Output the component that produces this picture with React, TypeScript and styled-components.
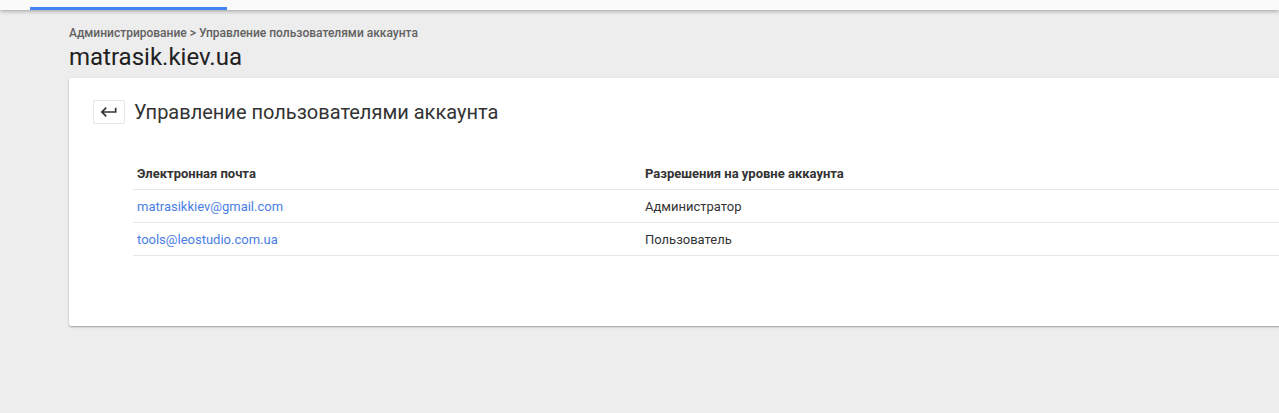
import React from "react";
import styled, { createGlobalStyle } from "styled-components";

const Global = createGlobalStyle`
  html, body {
    margin: 0;
    padding: 0;
    background: #ededed;
    overflow: hidden;
    font-family: Roboto, "Noto Sans", Arial, sans-serif;
  }
`;

const TopBar = styled.div`
  position: relative;
  z-index: 1;
  height: 10px;
  background: #fafafa;
  box-shadow: 0 1px 4px rgba(0, 0, 0, 0.35);
  display: flex;
  align-items: flex-end;
`;

const TabIndicator = styled.div`
  margin-left: 30px;
  width: 197px;
  height: 3px;
  background: #4285f4;
`;

const Main = styled.div`
  padding: 15px 0 0 69px;
  overflow: hidden;
`;

const Breadcrumb = styled.div`
  font-size: 12px;
  line-height: 16px;
  font-weight: 500;
  color: #616161;
`;

const PageTitle = styled.h1`
  margin: 1px 0 0;
  font-size: 24px;
  line-height: 30px;
  font-weight: 400;
  color: #212121;
`;

const Card = styled.div`
  margin: 6px 0 4px;
  width: 1300px;
  background: #fff;
  border-radius: 2px;
  box-shadow: 0 1px 2px rgba(0, 0, 0, 0.35);
  padding: 22px 0 70px 24px;
  box-sizing: border-box;
`;

const CardHeader = styled.div`
  display: flex;
  align-items: center;
  gap: 9px;
  height: 24px;
`;

const BackButton = styled.button`
  width: 32px;
  height: 24px;
  padding: 0;
  border: 1px solid #e6e6e6;
  background: #fff;
  border-radius: 1px;
  display: flex;
  align-items: center;
  justify-content: center;
  cursor: pointer;
`;

const CardTitle = styled.h2`
  margin: 0;
  font-size: 20px;
  font-weight: 400;
  color: #333;
`;

const Table = styled.div`
  margin: 33px 0 0 40px;
`;

const Row = styled.div<{ $header?: boolean }>`
  display: grid;
  grid-template-columns: 508px 1fr;
  height: 33px;
  align-items: center;
  border-bottom: 1px solid #e6e6e6;
  box-sizing: border-box;
  font-size: 13px;
  font-weight: ${(p) => (p.$header ? 700 : 400)};
  color: #333;
`;

const Cell = styled.div<{ $link?: boolean }>`
  padding-left: 4px;
  color: ${(p) => (p.$link ? "#4a7ee6" : "inherit")};
`;

const users = [
  { email: "matrasikkiev@gmail.com", role: "Администратор" },
  { email: "tools@leostudio.com.ua", role: "Пользователь" },
];

export default function App() {
  return (
    <>
      <Global />
      <TopBar>
        <TabIndicator />
      </TopBar>
      <Main>
        <Breadcrumb>Администрирование &gt; Управление пользователями аккаунта</Breadcrumb>
        <PageTitle>matrasik.kiev.ua</PageTitle>
        <Card>
          <CardHeader>
            <BackButton aria-label="Назад">
              <svg width="20" height="20" viewBox="0 0 24 24" fill="#333">
                <path d="M19 7v4H5.83l3.58-3.59L8 6l-6 6 6 6 1.41-1.41L5.83 13H21V7z" />
              </svg>
            </BackButton>
            <CardTitle>Управление пользователями аккаунта</CardTitle>
          </CardHeader>
          <Table>
            <Row $header>
              <Cell>Электронная почта</Cell>
              <Cell>Разрешения на уровне аккаунта</Cell>
            </Row>
            {users.map((u) => (
              <Row key={u.email}>
                <Cell $link>{u.email}</Cell>
                <Cell>{u.role}</Cell>
              </Row>
            ))}
          </Table>
        </Card>
      </Main>
    </>
  );
}
